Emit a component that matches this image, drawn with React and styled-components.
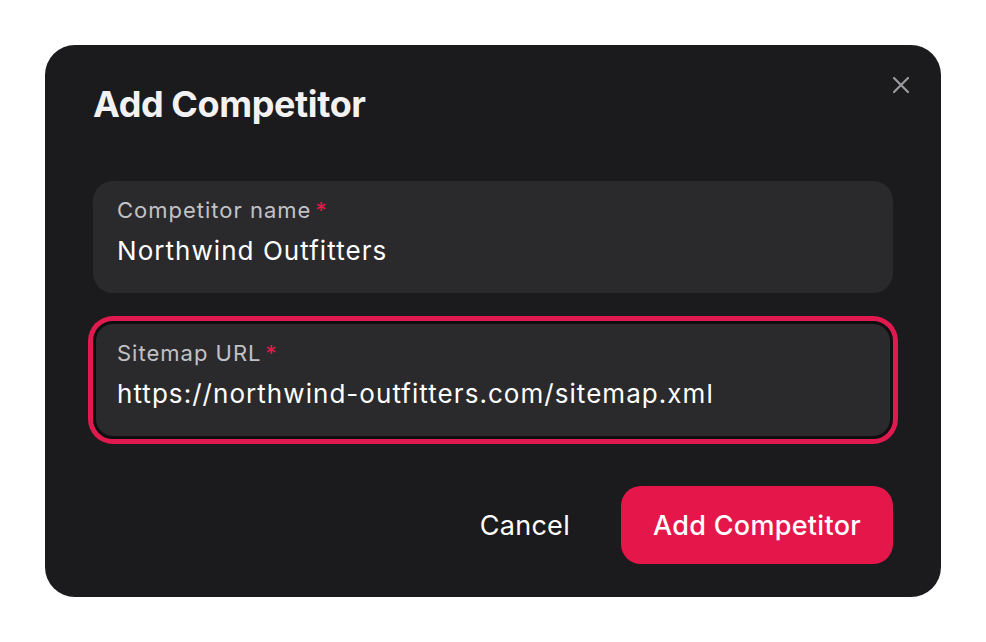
import React, { useState } from "react";
import styled, { createGlobalStyle } from "styled-components";

const GlobalStyle = createGlobalStyle`
  html, body {
    margin: 0;
    padding: 0;
    background: #ffffff;
  }
  body {
    font-family: Inter, "Liberation Sans", sans-serif;
  }
  * {
    box-sizing: border-box;
  }
`;

const Page = styled.div`
  width: 986px;
  height: 642px;
  padding: 45px;
`;

const Modal = styled.div`
  position: relative;
  width: 896px;
  height: 552px;
  background: #1b1b1d;
  border-radius: 30px;
  padding: 37px 48px 33px;
  display: flex;
  flex-direction: column;
`;

const Title = styled.h2`
  margin: 0 0 55px;
  font-size: 36px;
  line-height: 44px;
  font-weight: 700;
  color: #f2f2f3;
  letter-spacing: -0.4px;
`;

const CloseButton = styled.button`
  position: absolute;
  top: 30px;
  right: 30px;
  width: 20px;
  height: 20px;
  padding: 0;
  border: none;
  background: none;
  color: #9b9b9f;
  cursor: pointer;
  display: flex;
  align-items: center;
  justify-content: center;
`;

const Fields = styled.div`
  display: flex;
  flex-direction: column;
  gap: 28px;
`;

const Field = styled.label`
  display: flex;
  flex-direction: column;
  background: #2a2a2d;
  border-radius: 20px;
  padding: 15px 24px 25px;
  ${(p) =>
    p.$focused &&
    `
    border: 3px solid #0e0e10;
    box-shadow: 0 0 0 5px #e01a4f;
    padding-left: 21px;
  `}
`;

const Label = styled.span`
  font-size: 22px;
  line-height: 28px;
  color: #c2c2c6;
  letter-spacing: 1px;
`;

const Required = styled.span`
  color: #e8194b;
  margin-left: 4px;
`;

const Input = styled.input`
  margin-top: 10px;
  padding: 0;
  border: none;
  outline: none;
  background: transparent;
  font-family: inherit;
  font-size: 26px;
  line-height: 34px;
  height: 34px;
  letter-spacing: 1.05px;
  color: #ffffff;
`;

const Actions = styled.div`
  margin-top: auto;
  display: flex;
  justify-content: flex-end;
  align-items: center;
  gap: 26px;
`;

const GhostButton = styled.button`
  border: none;
  background: none;
  font-family: inherit;
  font-size: 27px;
  letter-spacing: 0.3px;
  color: #ffffff;
  padding: 0 25px;
  height: 78px;
  cursor: pointer;
`;

const PrimaryButton = styled.button`
  border: none;
  background: #e5174a;
  font-family: inherit;
  font-size: 27px;
  font-weight: 500;
  letter-spacing: 0.3px;
  color: #ffffff;
  height: 78px;
  width: 272px;
  border-radius: 20px;
  cursor: pointer;
`;

const CloseIcon = () => (
  <svg width="20" height="20" viewBox="0 0 20 20" fill="none">
    <path
      d="M3 3L17 17M17 3L3 17"
      stroke="currentColor"
      strokeWidth="2.2"
      strokeLinecap="round"
    />
  </svg>
);

const App = () => {
  const [name, setName] = useState("Northwind Outfitters");
  const [url, setUrl] = useState("https://northwind-outfitters.com/sitemap.xml");

  return (
    <>
      <GlobalStyle />
      <Page>
        <Modal>
          <CloseButton aria-label="Close">
            <CloseIcon />
          </CloseButton>
          <Title>Add Competitor</Title>
          <Fields>
            <Field>
              <Label>
                Competitor name<Required>*</Required>
              </Label>
              <Input value={name} onChange={(e) => setName(e.target.value)} />
            </Field>
            <Field $focused>
              <Label>
                Sitemap URL<Required>*</Required>
              </Label>
              <Input value={url} onChange={(e) => setUrl(e.target.value)} />
            </Field>
          </Fields>
          <Actions>
            <GhostButton>Cancel</GhostButton>
            <PrimaryButton>Add Competitor</PrimaryButton>
          </Actions>
        </Modal>
      </Page>
    </>
  );
};

export default App;
